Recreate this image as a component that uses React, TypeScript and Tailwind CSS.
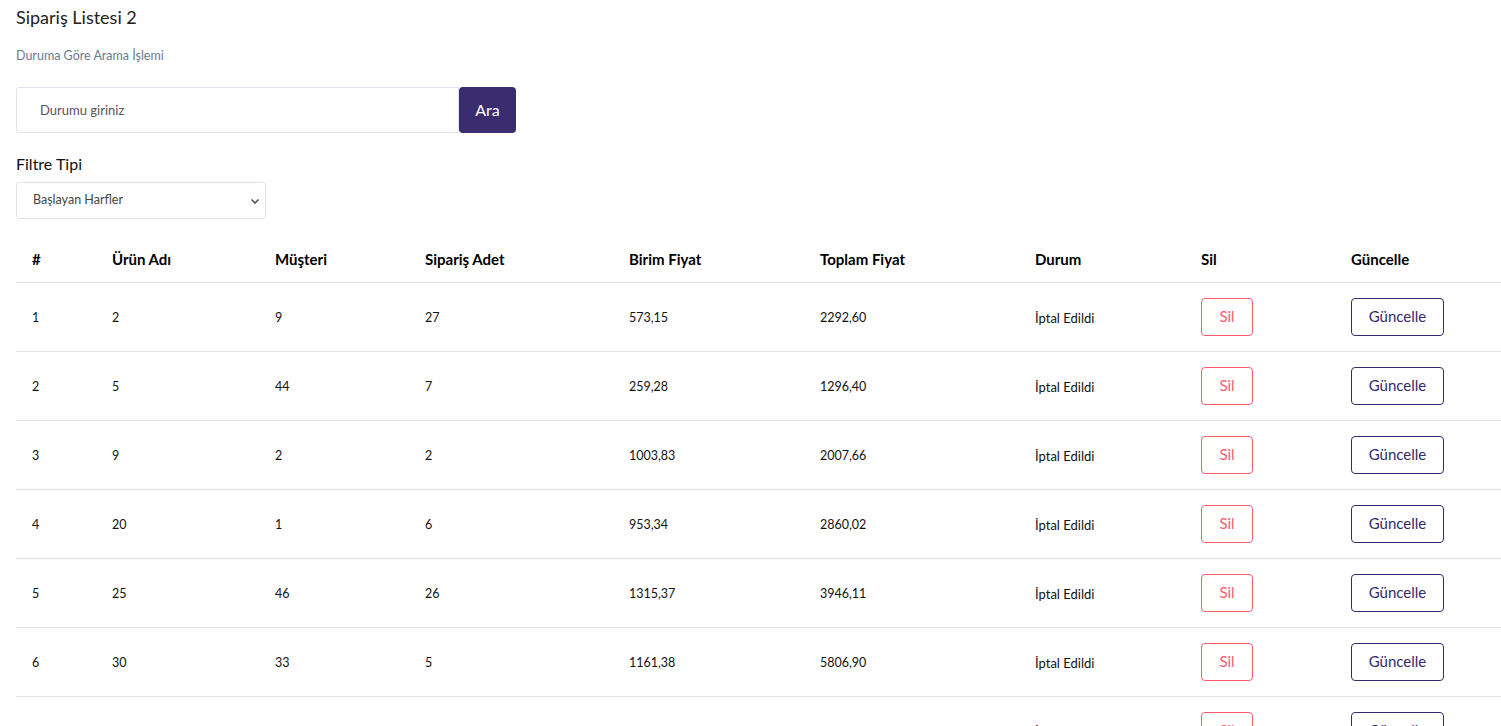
import React from "react";

const rows = [
  ["1", "2", "9", "27", "573,15", "2292,60"],
  ["2", "5", "44", "7", "259,28", "1296,40"],
  ["3", "9", "2", "2", "1003,83", "2007,66"],
  ["4", "20", "1", "6", "953,34", "2860,02"],
  ["5", "25", "46", "26", "1315,37", "3946,11"],
  ["6", "30", "33", "5", "1161,38", "5806,90"],
  ["7", "34", "12", "3", "812,40", "2437,20"],
  ["8", "41", "7", "9", "421,10", "3789,90"],
];

const headers = ["#", "Ürün Adı", "Müşteri", "Sipariş Adet", "Birim Fiyat", "Toplam Fiyat", "Durum", "Sil", "Güncelle"];
const widths = ["w-[80px]", "w-[163px]", "w-[150px]", "w-[204px]", "w-[191px]", "w-[215px]", "w-[166px]", "w-[150px]", "w-[166px]"];

export default function App() {
  return (
    <div className="bg-white min-h-[726px] text-[#111] pl-[16px] pt-[6px]" style={{ fontFamily: "Lato, 'Open Sans', sans-serif" }}>
      <h1 className="text-[18px] leading-[22px] text-[#222]">Sipariş Listesi 2</h1>
      <p className="mt-[20px] text-[12.5px] leading-[16px] text-[#6c7b8f]">Duruma Göre Arama İşlemi</p>
      <div className="mt-[23px] flex">
        <input
          placeholder="Durumu giriniz"
          className="w-[443px] h-[46px] border border-[#e3e1ee] rounded-l-[3px] px-[23px] text-[13px] text-[#444] placeholder:text-[#555] outline-none"
        />
        <button className="w-[57px] h-[46px] bg-[#3a2c6f] text-white text-[16px] rounded-[4px]">Ara</button>
      </div>
      <div className="mt-[21px] text-[16px] leading-[20px] text-[#111]">Filtre Tipi</div>
      <div className="mt-[8px] relative w-[250px] h-[37px] border border-[#e3e1ee] rounded-[3px] flex items-center pl-[16px] text-[12.5px] text-[#444]">
        Başlayan Harfler
        <svg className="absolute right-[5px] top-[15px]" width="10" height="7" viewBox="0 0 10 7">
          <path d="M1.5 1.5 L5 5 L8.5 1.5" fill="none" stroke="#555" strokeWidth="1.6" />
        </svg>
      </div>
      <table className="mt-[18px] w-[1485px] border-collapse table-fixed">
        <thead>
          <tr className="border-b border-[#e2e0ef] h-[45px]">
            {headers.map((h, i) => (
              <th key={h} className={`${widths[i]} text-left font-bold text-[15px] px-[16px] align-middle text-[#000]`}>
                {h}
              </th>
            ))}
          </tr>
        </thead>
        <tbody>
          {rows.map((r) => (
            <tr key={r[0]} className="border-b border-[#e2e0ef] h-[69px]">
              {r.map((c, i) => (
                <td key={i} className="px-[16px] pt-[4px] text-[12.5px] text-[#111] align-middle">
                  {c}
                </td>
              ))}
              <td className="px-[16px] pt-[4px] text-[13px] text-[#111] align-middle">İptal Edildi</td>
              <td className="px-[16px] align-middle">
                <button className="w-[52px] h-[38px] border border-[#ff5c6c] text-[#ff5c6c] rounded-[4px] text-[15px]">Sil</button>
              </td>
              <td className="px-[16px] align-middle">
                <button className="w-[93px] h-[38px] border border-[#35296b] text-[#35296b] rounded-[4px] text-[15px]">Güncelle</button>
              </td>
            </tr>
          ))}
        </tbody>
      </table>
    </div>
  );
}
